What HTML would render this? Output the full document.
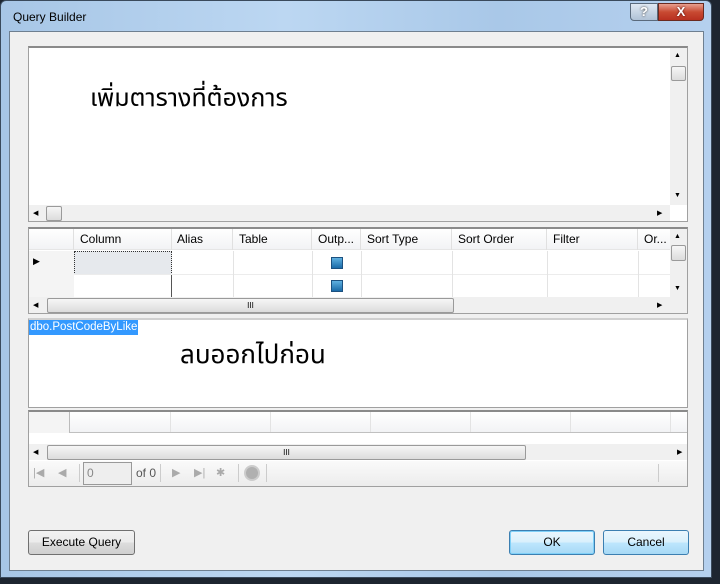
<!DOCTYPE html><html><head><style>
*{margin:0;padding:0;box-sizing:border-box}
body{width:720px;height:584px;background:#1d2530;position:relative;overflow:hidden;font-family:"Liberation Sans",sans-serif;font-size:12px;color:#000}
.a{position:absolute}
.sb{background:#f0f0f0}
.thumb{position:absolute;background:linear-gradient(#f6f6f6,#dcdcdc);border:1px solid #9a9a9a;border-radius:2px}
.th{position:absolute;top:0;height:21px;line-height:20px;padding-left:6px;border-right:1px solid #e0e0e0;font-size:12px}
.vl{position:absolute;width:1px;background:#e3e3e3}
.btn{position:absolute;height:25px;border:1px solid #707070;border-radius:3px;background:linear-gradient(#f2f2f2 0,#ebebeb 50%,#dddddd 51%,#cfcfcf 100%);text-align:center;line-height:23px;font-size:12px}
.cb{position:absolute;width:12px;height:12px;border:1px solid #1c5180;background:linear-gradient(#5fb0e0,#1a6aa8)}
</style></head><body>
<div class="a" style="left:0;top:0;width:712px;height:578px;background:linear-gradient(90deg,#a7c6e6,#bcd7f2 40%,#a9c8e8 70%,#b5d0ee);border-radius:6px 6px 0 0;border:1px solid #3a4a5c"></div>
<div class="a" style="left:13px;top:10px;font-size:12px">Query Builder</div>
<div class="a" style="left:630px;top:3px;width:28px;height:18px;border:1px solid #5a6a7c;border-radius:0 0 0 4px;background:linear-gradient(#dfe8f2,#b0c2d6);color:#fff;text-align:center;font-weight:bold;font-size:13px;line-height:16px;text-shadow:0 0 2px #333">?</div>
<div class="a" style="left:658px;top:3px;width:46px;height:18px;border:1px solid #6a2a20;border-radius:0 0 4px 0;background:linear-gradient(#e8a090,#c84a32 50%,#b83020);color:#fff;text-align:center;font-weight:bold;font-size:13px;line-height:16px;text-shadow:0 0 2px #400">X</div>
<div class="a" style="left:9px;top:31px;width:695px;height:540px;background:#f0f0f0;border:1px solid #6e7f90"></div>
<!-- diagram pane -->
<div class="a" style="left:28px;top:46px;width:660px;height:176px;background:#fff;border:1px solid #a0a0a0;border-top:2px solid #8a8a8a"></div>
<div class="a" style="left:90px;top:80px;font-size:25px;font-family:'Liberation Sans','Noto Sans Thai','DejaVu Sans',sans-serif">เพิ่มตารางที่ต้องการ</div>
<div class="a sb" style="left:670px;top:48px;width:17px;height:157px"></div>
<div class="a" style="left:674px;top:52px;font-size:7px">▲</div><div class="a" style="left:674px;top:192px;font-size:7px">▼</div>
<div class="thumb" style="left:671px;top:66px;width:15px;height:15px"></div>
<div class="a sb" style="left:29px;top:205px;width:641px;height:16px"></div>
<div class="a" style="left:33px;top:209px;font-size:7px">◀</div><div class="a" style="left:657px;top:209px;font-size:7px">▶</div>
<div class="thumb" style="left:46px;top:206px;width:16px;height:15px"></div>
<!-- grid pane -->
<div class="a" style="left:28px;top:227px;width:660px;height:87px;background:#fff;border:1px solid #a0a0a0;border-top:2px solid #8a8a8a;overflow:hidden">
<div class="a" style="left:0;top:0;width:641px;height:21px;background:linear-gradient(#fff,#f2f3f5);border-bottom:1px solid #e6e6e6"></div>
<div class="th" style="left:0;width:45px"></div>
<div class="th" style="left:45px;width:98px">Column</div>
<div class="th" style="left:142px;width:62px">Alias</div>
<div class="th" style="left:204px;width:79px">Table</div>
<div class="th" style="left:283px;width:49px">Outp...</div>
<div class="th" style="left:332px;width:91px">Sort Type</div>
<div class="th" style="left:423px;width:95px">Sort Order</div>
<div class="th" style="left:518px;width:91px">Filter</div>
<div class="th" style="left:609px;width:35px">Or...</div>
<div class="a" style="left:0;top:22px;width:45px;height:47px;background:#f4f4f4"></div>
<div class="a" style="left:4px;top:27px;font-size:9px">▶</div>
<div class="a" style="left:45px;top:22px;width:98px;height:24px;background:#e6e9ed;border:1px dotted #333"></div>
<div class="a" style="left:142px;top:46px;width:1px;height:24px;background:#555"></div>
<div class="a" style="left:45px;top:45px;width:596px;height:1px;background:#ececec"></div>
<div class="vl" style="left:204px;top:22px;height:47px"></div><div class="vl" style="left:283px;top:22px;height:47px"></div><div class="vl" style="left:332px;top:22px;height:47px"></div><div class="vl" style="left:423px;top:22px;height:47px"></div><div class="vl" style="left:518px;top:22px;height:47px"></div><div class="vl" style="left:609px;top:22px;height:47px"></div>
<div class="cb" style="left:302px;top:28px"></div><div class="cb" style="left:302px;top:51px"></div>
</div>
<div class="a sb" style="left:670px;top:229px;width:17px;height:68px"></div>
<div class="a" style="left:674px;top:233px;font-size:7px">▲</div><div class="a" style="left:674px;top:285px;font-size:7px">▼</div>
<div class="thumb" style="left:671px;top:245px;width:15px;height:16px"></div>
<div class="a sb" style="left:29px;top:297px;width:658px;height:16px"></div>
<div class="a" style="left:33px;top:301px;font-size:7px">◀</div><div class="a" style="left:657px;top:301px;font-size:7px">▶</div>
<div class="thumb" style="left:47px;top:298px;width:407px;height:15px;text-align:center;font-size:8px;line-height:13px">III</div>
<!-- sql pane -->
<div class="a" style="left:28px;top:318px;width:660px;height:90px;background:#fff;border:1px solid #a0a0a0;border-top:2px solid #d0d0d0"></div>
<div class="a" style="left:29px;top:320px;background:#3399ff;color:#fff;padding:0 1px;height:15px;line-height:15px;font-size:11.5px">dbo.PostCodeByLike</div>
<div class="a" style="left:180px;top:335px;font-size:26px;font-family:'Liberation Sans','Noto Sans Thai','DejaVu Sans',sans-serif">ลบออกไปก่อน</div>
<!-- results -->
<div class="a" style="left:28px;top:410px;width:660px;height:77px;background:#fff;border:1px solid #a0a0a0;border-top:2px solid #8a8a8a"></div>
<div class="a" style="left:29px;top:412px;width:658px;height:21px;background:linear-gradient(#fff,#f2f3f5);border-bottom:1px solid #c0c0c0"></div>
<div class="a" style="left:29px;top:412px;width:41px;height:21px;background:#f4f4f4;border-right:1px solid #bbb"></div>
<div class="vl" style="left:170px;top:412px;height:20px"></div><div class="vl" style="left:270px;top:412px;height:20px"></div><div class="vl" style="left:370px;top:412px;height:20px"></div><div class="vl" style="left:470px;top:412px;height:20px"></div><div class="vl" style="left:570px;top:412px;height:20px"></div><div class="vl" style="left:670px;top:412px;height:20px"></div>
<div class="a sb" style="left:29px;top:444px;width:658px;height:16px"></div>
<div class="a" style="left:33px;top:448px;font-size:7px">◀</div><div class="a" style="left:677px;top:448px;font-size:7px">▶</div>
<div class="thumb" style="left:47px;top:445px;width:479px;height:15px;text-align:center;font-size:8px;line-height:13px">III</div>
<div class="a" style="left:29px;top:461px;width:658px;height:25px;background:linear-gradient(#fafafa,#ececec)"></div>
<div class="a" style="left:33px;top:466px;font-size:11px;color:#aaa">|◀</div>
<div class="a" style="left:58px;top:466px;font-size:11px;color:#aaa">◀</div>
<div class="a" style="left:79px;top:464px;width:1px;height:18px;background:#ccc"></div>
<div class="a" style="left:83px;top:462px;width:49px;height:23px;border:1px solid #999;background:#eee;padding-left:3px;line-height:21px;color:#888">0</div>
<div class="a" style="left:136px;top:466px;color:#555">of 0</div>
<div class="a" style="left:160px;top:464px;width:1px;height:18px;background:#ccc"></div>
<div class="a" style="left:172px;top:466px;font-size:11px;color:#aaa">▶</div>
<div class="a" style="left:194px;top:466px;font-size:11px;color:#aaa">▶|</div>
<div class="a" style="left:216px;top:466px;font-size:11px;color:#aaa">✱</div>
<div class="a" style="left:238px;top:464px;width:1px;height:18px;background:#ccc"></div>
<div class="a" style="left:244px;top:465px;width:16px;height:16px;border-radius:50%;background:#b0b0b0;border:2px solid #ccc"></div>
<div class="a" style="left:266px;top:464px;width:1px;height:18px;background:#ccc"></div>
<div class="a" style="left:658px;top:464px;width:1px;height:18px;background:#ccc"></div>
<!-- buttons -->
<div class="btn" style="left:28px;top:530px;width:107px">Execute Query</div>
<div class="btn" style="left:509px;top:530px;width:86px;border-color:#3c7fb1;background:linear-gradient(#eaf6fd 0,#d9f0fc 50%,#bee6fd 51%,#a7d9f5 100%);box-shadow:inset 0 0 0 1px #7fd0f8">OK</div>
<div class="btn" style="left:603px;top:530px;width:86px;border-color:#3c7fb1;background:linear-gradient(#eaf6fd 0,#d9f0fc 50%,#bee6fd 51%,#a7d9f5 100%)">Cancel</div>
</body></html>
